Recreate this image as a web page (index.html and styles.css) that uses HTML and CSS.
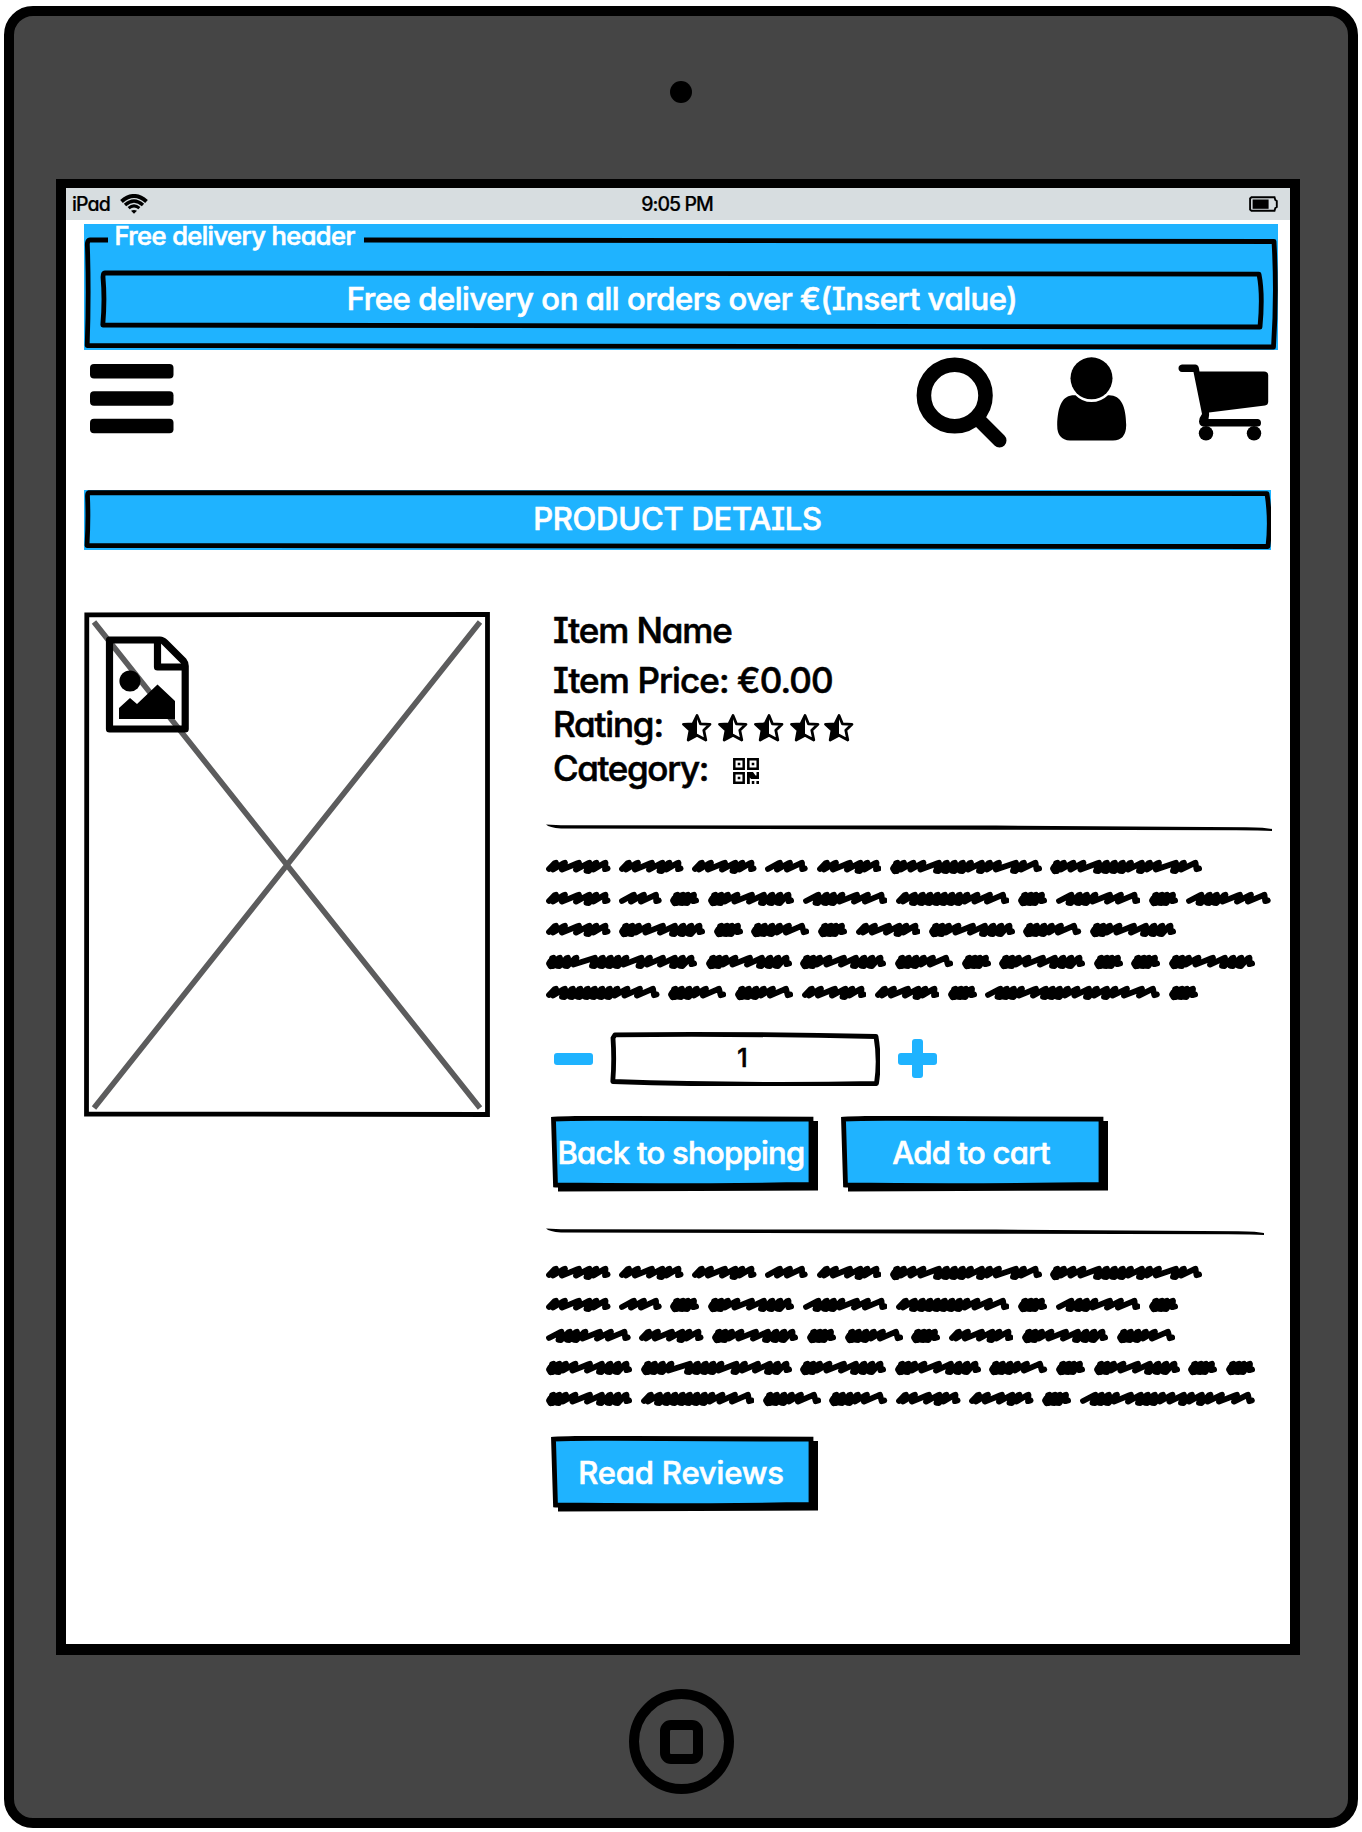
FILE: index.html
```html
<!DOCTYPE html>
<html lang="en">
<head>
<meta charset="utf-8">
<title>Product details</title>
<link rel="stylesheet" href="styles.css">
</head>
<body>
<div class="device">
  <div class="camera"></div>
  <div class="screen">
    <div class="status">
      <span class="carrier"><span class="t-ipad">iPad</span>
        <svg width="28" height="20" viewBox="0 0 28 20" fill="none" stroke="#000"><path d="M1.500 7.500Q14-3.500 26.500 7.500" stroke-width="4"/><path d="M5 11Q14 3 23 11" stroke-width="3.400"/><path d="M8.600 14.200Q14 9.600 19.400 14.200" stroke-width="3"/><path d="M11 16.800Q14 15.200 17 16.800L14 19.800Z" fill="#000" stroke="none"/></svg>
      </span>
      <span class="t-clock">9:05 PM</span>
      <svg class="battery" width="29" height="16" viewBox="0 0 29 16"><path d="M2.500 1.200H25.500L26.300 4L27.800 5V11L26.300 12L25.500 14.800H2.500L1.100 13.500V2.500Z" fill="none" stroke="#000" stroke-width="1.900"/><path d="M3.600 3.500H19.600V12.800H3.600Z"/></svg>
    </div>
    <main class="page">
      <section class="delivery">
        <svg class="sketch" viewBox="0 0 1194 126"><path d="M24 16H6Q3 16 3.400 22Q5 70 3.200 121.500Q500 124.500 1189.500 123Q1193 70 1190 17.500Q700 15.500 280 16"/></svg>
        <div class="legend t-legend">Free delivery header</div>
        <div class="banner">
          <svg class="sketch" viewBox="0 0 1164 60"><path d="M5 2.800Q500 2.500 1159 4.200Q1163 24 1160 57Q600 58 2.800 55Q5 30 3 7Q3 3 5 2.800Z"/></svg>
          <span class="t-banner">Free delivery on all orders over €(Insert value)</span>
        </div>
      </section>

      <nav class="toolbar">
        <svg class="menu" width="84" height="70" viewBox="0 0 84 70"><rect y="0" width="83.500" height="14.500" rx="4"/><rect y="27.300" width="83.500" height="14.500" rx="4"/><rect y="54.700" width="83.500" height="14.500" rx="4"/></svg>
        <svg class="search" width="92" height="92" viewBox="0 0 92 92" fill="none" stroke="#000"><circle cx="38.700" cy="38.500" r="30.800" stroke-width="14.600"/><path d="M61 61L83.500 83.500" stroke-width="14" stroke-linecap="round"/></svg>
        <svg class="user" width="70" height="84" viewBox="0 0 70 84"><circle cx="34.500" cy="21.300" r="21"/><path d="M18.500 38.200Q25 45 34.500 45Q44 45 51 38.200C64 37.500 69 49 69.200 68Q69 83.500 56 83.500H13Q0 83 .2 68C.8 48 5.500 37.500 18.500 38.200Z"/></svg>
        <svg class="cart" width="92" height="78" viewBox="0 0 92 78"><path d="M4 .5H17.500Q21 .5 21.500 7.500H86Q90 7.500 90.200 11V38Q90 41 87 41.500L31 48.500Q31.500 51 30.500 55H80Q83 55.500 83 59Q83 62.500 79.500 62.500H25Q21.500 62 21 57.500Q21 54 24 50L15.500 8H4Q.5 7.500 .5 4.200Q.5 1 4 .5Z"/><ellipse cx="28" cy="69.300" rx="7.200" ry="7.300"/><ellipse cx="76" cy="69.300" rx="7.200" ry="7.300"/></svg>
      </nav>

      <h1 class="title">
        <svg class="sketch" viewBox="0 0 1187 60"><path d="M5 2.600Q600 2 1183 3.600Q1187 30 1184 56.500Q500 58 3 55.500Q4.500 30 3.500 6Q3.500 3 5 2.600Z"/></svg>
        <span class="t-title">PRODUCT DETAILS</span>
      </h1>

      <div class="product">
        <svg class="photo" width="406" height="505" viewBox="0 0 406 505" fill="none">
          <path d="M10 10L396 496M396 10L10 496" stroke="#5c5c5d" stroke-width="5.600"/>
          <path d="M2.800 2.800L403.500 2.500V502.500L2.500 502Z" stroke="#000" stroke-width="4.800"/>
          <g stroke="#000" stroke-width="7.200" stroke-linejoin="round"><path d="M25.500 28H76Q78.500 28 81 30.500L99.500 49Q101.200 51 101.200 54V117H25.500Z"/><path d="M73.500 28V55H101"/></g>
          <circle cx="46" cy="69" r="10.600" fill="#000"/><path d="M35 107V96L46 86L53 92L73.500 72.500L91 89V107Z" fill="#000"/>
        </svg>

        <div class="details">
          <div class="info">
            <div class="row name"><span class="t-name">Item Name</span></div>
            <div class="row price"><span class="t-price">Item Price: €0.00</span></div>
            <div class="row rating"><span class="t-rating">Rating:</span>
              <svg class="stars" width="174" height="30" viewBox="0 0 174 30">
                <defs><g id="star"><path d="M15 2.500L18.400 10.800L28 11.300L21.800 17.200L23.800 27L15 22.200L6.200 27L8 17.300L1.500 11.300L11 10.800Z" fill="none" stroke="#000" stroke-width="2.800" stroke-linejoin="round"/><path d="M15 2V23L6 27.500L8 17.500L1 11.500L11 11Z"/></g></defs>
                <use href="#star"/><use href="#star" x="36"/><use href="#star" x="72"/><use href="#star" x="108"/><use href="#star" x="142"/>
              </svg>
            </div>
            <div class="row category"><span class="t-category">Category:</span>
              <svg class="qr" width="26" height="26" viewBox="0 0 26 26" fill="none" stroke="#000" stroke-width="2.500"><path d="M1.300 1.300H10.700V10.700H1.300ZM15.300 1.300H24.700V10.700H15.300ZM1.300 15.300H10.700V24.700H1.300Z"/><path d="M4.700 4.700H7.300V7.300H4.700ZM18.700 4.700H21.300V7.300H18.700ZM4.700 18.700H7.300V21.300H4.700ZM14 14H20L22.500 17.500H23.500V14H26V21H18L16.800 19.500V26H14ZM18.800 23H21.300V26H18.800ZM23.400 23H26V26H23.400Z" fill="#000" stroke="none"/></svg>
            </div>
          </div>

          <svg class="rule rule-top" width="727" height="8" viewBox="0 0 727 8"><path d="M0 .5L15 1.300L450 1.600L700 3.200Q720 3.500 726 5V7Q715 6.300 690 6.300L450 5.800L15 4.500Q3 3.500 0 .5Z"/></svg>
          <div class="scribble scribble-top" data-lines="AAABAII ABCDEGCECE ADCFCADFD HDDFCDCCD GFFAACJC"></div>

          <div class="quantity">
            <svg width="39" height="39" viewBox="0 0 39 39" fill="#1fb3ff"><rect y="14" width="39" height="12" rx="3"/></svg>
            <div class="amount">
              <svg class="sketch" viewBox="0 0 270 54"><path d="M5 2.800Q130 1.500 266 4.500Q270 28 266.500 51.500Q130 54 2.800 49.500Q4.500 28 3 6Z"/></svg>
              <span class="t-amount">1</span>
            </div>
            <svg width="39" height="39" viewBox="0 0 39 39" fill="#1fb3ff"><rect y="14" width="39" height="12" rx="3"/><rect x="14" width="11" height="39" rx="3"/></svg>
          </div>

          <div class="actions">
            <div class="button"><svg class="sketch" viewBox="0 0 268 76"><path class="shade" d="M7 20V75.500L267 74.500V5H240Z"/><path class="face" d="M2.500 3.200Q20 2 60 2.300L260 3.200V68.500Q120 70.500 4.500 69Z"/></svg><span class="t-back">Back to shopping</span></div>
            <div class="button"><svg class="sketch" viewBox="0 0 268 76"><path class="shade" d="M7 20V75.500L267 74.500V5H240Z"/><path class="face" d="M2.500 3.200Q20 2 60 2.300L260 3.200V68.500Q120 70.500 4.500 69Z"/></svg><span class="t-add">Add to cart</span></div>
          </div>

          <svg class="rule rule-mid" width="727" height="8" viewBox="0 0 727 8"><path d="M0 .5L15 1.300L450 1.600L692 3.200Q712 3.500 718 5V7Q707 6.300 682 6.300L450 5.800L15 4.500Q3 3.500 0 .5Z"/></svg>
          <div class="scribble scribble-mid" data-lines="AAABAII ABCDEGCEC EADCFCADF DHDDFCDCC DGFFAACJ"></div>

          <div class="actions reviews">
            <div class="button"><svg class="sketch" viewBox="0 0 268 76"><path class="shade" d="M7 20V75.500L267 74.500V5H240Z"/><path class="face" d="M2.500 3.200Q20 2 60 2.300L260 3.200V68.500Q120 70.500 4.500 69Z"/></svg><span class="t-read">Read Reviews</span></div>
          </div>
        </div>
      </div>
    </main>
  </div>
  <div class="home"><div class="home-mark"></div></div>
</div>
<script src="script.js"></script>
</body>
</html>
```
FILE: styles.css
```css
* { box-sizing: border-box; }

body {
  margin: 0;
  background: #fff;
  color: #000;
  font-family: Inter, "Open Sans", sans-serif;
  font-weight: 500;
  font-feature-settings: "cv11", "cv08";
  -webkit-text-stroke: .6px currentColor;
  white-space: nowrap;
}

svg { display: block; flex: none; }

.device {
  display: flex;
  flex-direction: column;
  align-items: center;
  width: 1354px;
  height: 1822px;
  margin: 6px 4px 0;
  border: 10px solid #000;
  border-radius: 29px;
  background: #454545;
}

.camera { width: 22px; height: 22px; margin-top: 65px; border-radius: 50%; background: #000; }

.screen {
  width: 1244px;
  height: 1476px;
  margin: 76px 6px 0 0;
  border: solid #000;
  border-width: 9px 10px 11px;
  background: #fff;
}

.home {
  display: flex;
  align-items: center;
  justify-content: center;
  width: 105px;
  height: 105px;
  margin-top: 34px;
  border: 10px solid #000;
  border-radius: 50%;
}
.home-mark { width: 43px; height: 44px; border: 10px solid #000; border-radius: 11px; }

.status {
  display: grid;
  grid-template-columns: 1fr auto 1fr;
  align-items: center;
  height: 32px;
  padding: 0 12px 0 6px;
  background: #d7dde0;
  font-size: 19.5px;
  line-height: 30px;
  -webkit-text-stroke-width: .2px;
}
.t-ipad { letter-spacing: -.9px; }
.t-clock { margin-left: -3px; margin-right: -7px; letter-spacing: -.95px; }
.carrier { display: flex; align-items: center; gap: 10.500px; }
.battery { justify-self: end; }

.page { padding: 4px 12px 0 18px; }

.sketch {
  position: absolute;
  inset: 0;
  width: 100%;
  height: 100%;
  fill: none;
  stroke: #000;
  stroke-width: 4.8px;
  stroke-linejoin: round;
}

.delivery { position: relative; height: 126px; background: #1fb3ff; color: #fff; }
.legend { padding-left: 30.500px; font-size: 25.5px; line-height: 24px; letter-spacing: -.57px; }
.banner {
  position: relative;
  display: flex;
  align-items: center;
  justify-content: center;
  width: 1164px;
  height: 60px;
  margin: 22px 0 0 16px;
  font-size: 31px;
  letter-spacing: -.43px;
}
.banner span { margin-top: -3px; }

.toolbar { display: flex; height: 140px; }
.menu { margin: 14px 742.500px 0 5.500px; }
.search { margin: 6.500px 48.500px 0 0; }
.user { margin: 6.500px 51.500px 0 0; }
.cart { margin-top: 13.500px; }

.title {
  position: relative;
  display: flex;
  align-items: center;
  justify-content: center;
  width: 1187px;
  height: 60px;
  margin: 0;
  background: #1fb3ff;
  color: #fff;
  font-size: 31px;
  font-weight: 500;
  letter-spacing: -.25px;
}
.title span { margin-top: -4px; }

.product { display: flex; align-items: flex-start; gap: 56px; margin-top: 56px; }
.photo { margin-top: 6px; }

.info { padding-left: 7px; font-size: 35px; }
.row { display: flex; align-items: center; }
.name { height: 48px; letter-spacing: -1.100px; }
.price { height: 52px; letter-spacing: -.9px; }
.rating { height: 36px; letter-spacing: -1.150px; }
.category { height: 52px; letter-spacing: -1.350px; }
.stars { margin: 7px 0 0 19px; }
.qr { margin: 5px 0 0 25px; }

.rule-top { margin-top: 30px; }
.scribble-top { margin-top: 19.200px; }
.rule-mid { margin-top: 36px; }
.scribble-mid { margin-top: 21.200px; }
.line { display: flex; align-items: center; gap: 8.600px; height: 31.600px; }
.line path {
  fill: none;
  stroke: #000;
  stroke-width: 5.800px;
  stroke-linecap: round;
  stroke-linejoin: round;
}

.quantity { display: flex; align-items: center; height: 54px; margin: 22.800px 0 0 8px; }
.amount {
  position: relative;
  display: flex;
  align-items: center;
  justify-content: center;
  width: 270px;
  height: 54px;
  margin: 0 18px 0 17px;
  font-size: 25px;
}
.amount span { margin: -1px 5px 0 0; }

.actions { display: flex; gap: 22px; margin: 30px 0 0 5px; }
.reviews { margin-top: 20.800px; }
.button {
  position: relative;
  display: flex;
  align-items: center;
  justify-content: center;
  width: 268px;
  height: 76px;
  padding: 0 8px 2px 0;
  color: #fff;
  font-size: 31px;
}
/* Keeps the label above the drawn button face. */
.button span { position: relative; }
.t-back { letter-spacing: -.7px; }
.t-add { letter-spacing: -.75px; }
.t-read { letter-spacing: -.15px; }
.shade { fill: #000; stroke: none; }
.face { fill: #1fb3ff; stroke-linejoin: miter; }
```
FILE: script.js
```js
// Placeholder copy: each letter is a scribbled word, given by its width and the x of its peaks.
const words = {
  A: [64.5, 11, 20, 34, 44.5, 51.5, 60.5],
  B: [42.7, 16, 26, 38],
  C: [29, 8.5, 14, 19, 25],
  D: [86, 8.5, 14.5, 21, 30.5, 45, 57, 65.5, 73.5, 81.5],
  E: [84.7, 16.5, 25, 32, 40.5, 55, 66, 79.5],
  F: [58.2, 8.5, 15, 22.5, 30, 39, 52],
  G: [113.5, 11, 20, 28, 35.5, 43, 50, 57.5, 65, 72.5, 82.5, 95, 108],
  H: [151, 8.5, 15, 23, 31.5, 50, 58, 66, 73.5, 81.5, 96.5, 105, 118, 130, 138, 146.5],
  I: [152, 8.5, 15, 24.5, 34.5, 50, 58, 66, 74, 82, 93, 101, 110, 127, 135, 146.5],
  J: [174.8, 16.5, 23, 30, 38, 52, 62, 69, 76, 84, 93.5, 105, 113, 123, 131.5, 143, 158, 169]
};

function word(key) {
  const [width, ...peaks] = words[key];
  // Words with an early first peak open with a heavy blot.
  let d = peaks[0] < 9 ? 'M4.5 7L3 9.500L4.500 12.200' : 'M3 10';
  peaks.forEach((x, i) => {
    const next = peaks[i + 1];
    d += `L${x - 2.5} 4.300L${x - 1} 3.800`;
    if (next) {
      const gap = next - x;
      d += gap < 9 ? `L${x - 4} 11.800L${x - 1.500} 12` : `L${x - 4} 10.600`;
    }
  });
  d += `L${width - 5.500} 10.200L${width - 2.900} 9.500`;
  return `<svg width="${width}" height="16" viewBox="0 0 ${width} 16"><path d="${d}"/></svg>`;
}

document.querySelectorAll('.scribble').forEach(block => {
  block.innerHTML = block.dataset.lines.split(' ')
    .map(line => `<div class="line">${[...line].map(word).join('')}</div>`).join('');
});
```
